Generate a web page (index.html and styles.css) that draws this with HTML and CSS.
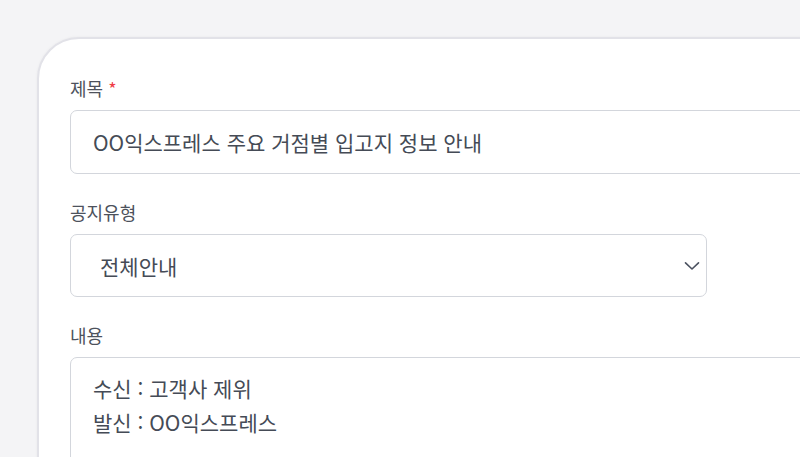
FILE: index.html
```html
<!DOCTYPE html>
<html lang="ko">
<head>
<meta charset="utf-8">
<link rel="stylesheet" href="styles.css">
</head>
<body>
<div class="page">
  <div class="card">
    <div class="field">
      <div class="label">제목 <span class="req">*</span></div>
      <div class="control input">OO익스프레스 주요 거점별 입고지 정보 안내</div>
    </div>
    <div class="field">
      <div class="label">공지유형</div>
      <div class="control select">
        <span class="select-text">전체안내</span>
        <svg class="chevron" width="16" height="10" viewBox="0 0 16 10"><path d="M1.5 1.8 L8 8 L14.5 1.8" fill="none" stroke="#4b5260" stroke-width="1.6" stroke-linecap="round" stroke-linejoin="round"/></svg>
      </div>
    </div>
    <div class="field">
      <div class="label">내용</div>
      <div class="control textarea">
        <div>수신 : 고객사 제위</div>
        <div>발신 : OO익스프레스</div>
        <div>&nbsp;</div>
      </div>
    </div>
  </div>
</div>
</body>
</html>
```

FILE: styles.css
```css
html, body {
  margin: 0;
  padding: 0;
}
body {
  background: #f4f4f6;
  width: 800px;
  height: 457px;
  overflow: hidden;
  font-family: "Noto Sans CJK KR", "Noto Sans", sans-serif;
  color: #4b5260;
}
.page {
  padding: 37px 0 0 37px;
}
.card {
  width: 900px;
  height: 600px;
  background: #ffffff;
  border: 2px solid #e2e2e8;
  border-radius: 42px;
  box-shadow: 0 0 3px rgba(0, 0, 0, 0.05);
  padding: 37px 0 0 31px;
  box-sizing: border-box;
  display: flex;
  flex-direction: column;
  gap: 26px;
}
.field {
  display: flex;
  flex-direction: column;
  gap: 10px;
}
.label {
  font-size: 18px;
  line-height: 24px;
  color: #4d525c;
}
.req {
  color: #ef3b45;
}
.control {
  border: 1.5px solid #d3d6dc;
  border-radius: 7px;
  background: #fff;
  font-size: 21px;
  color: #454b56;
  box-sizing: border-box;
}
.input {
  width: 800px;
  height: 64px;
  padding: 0 22px;
  display: flex;
  align-items: center;
}
.select {
  width: 637px;
  height: 63px;
  padding: 0 6px 0 29px;
  display: flex;
  align-items: center;
  justify-content: space-between;
}
.chevron {
  display: block;
}
.textarea {
  width: 800px;
  padding: 13px 22px;
  line-height: 34px;
}
```
